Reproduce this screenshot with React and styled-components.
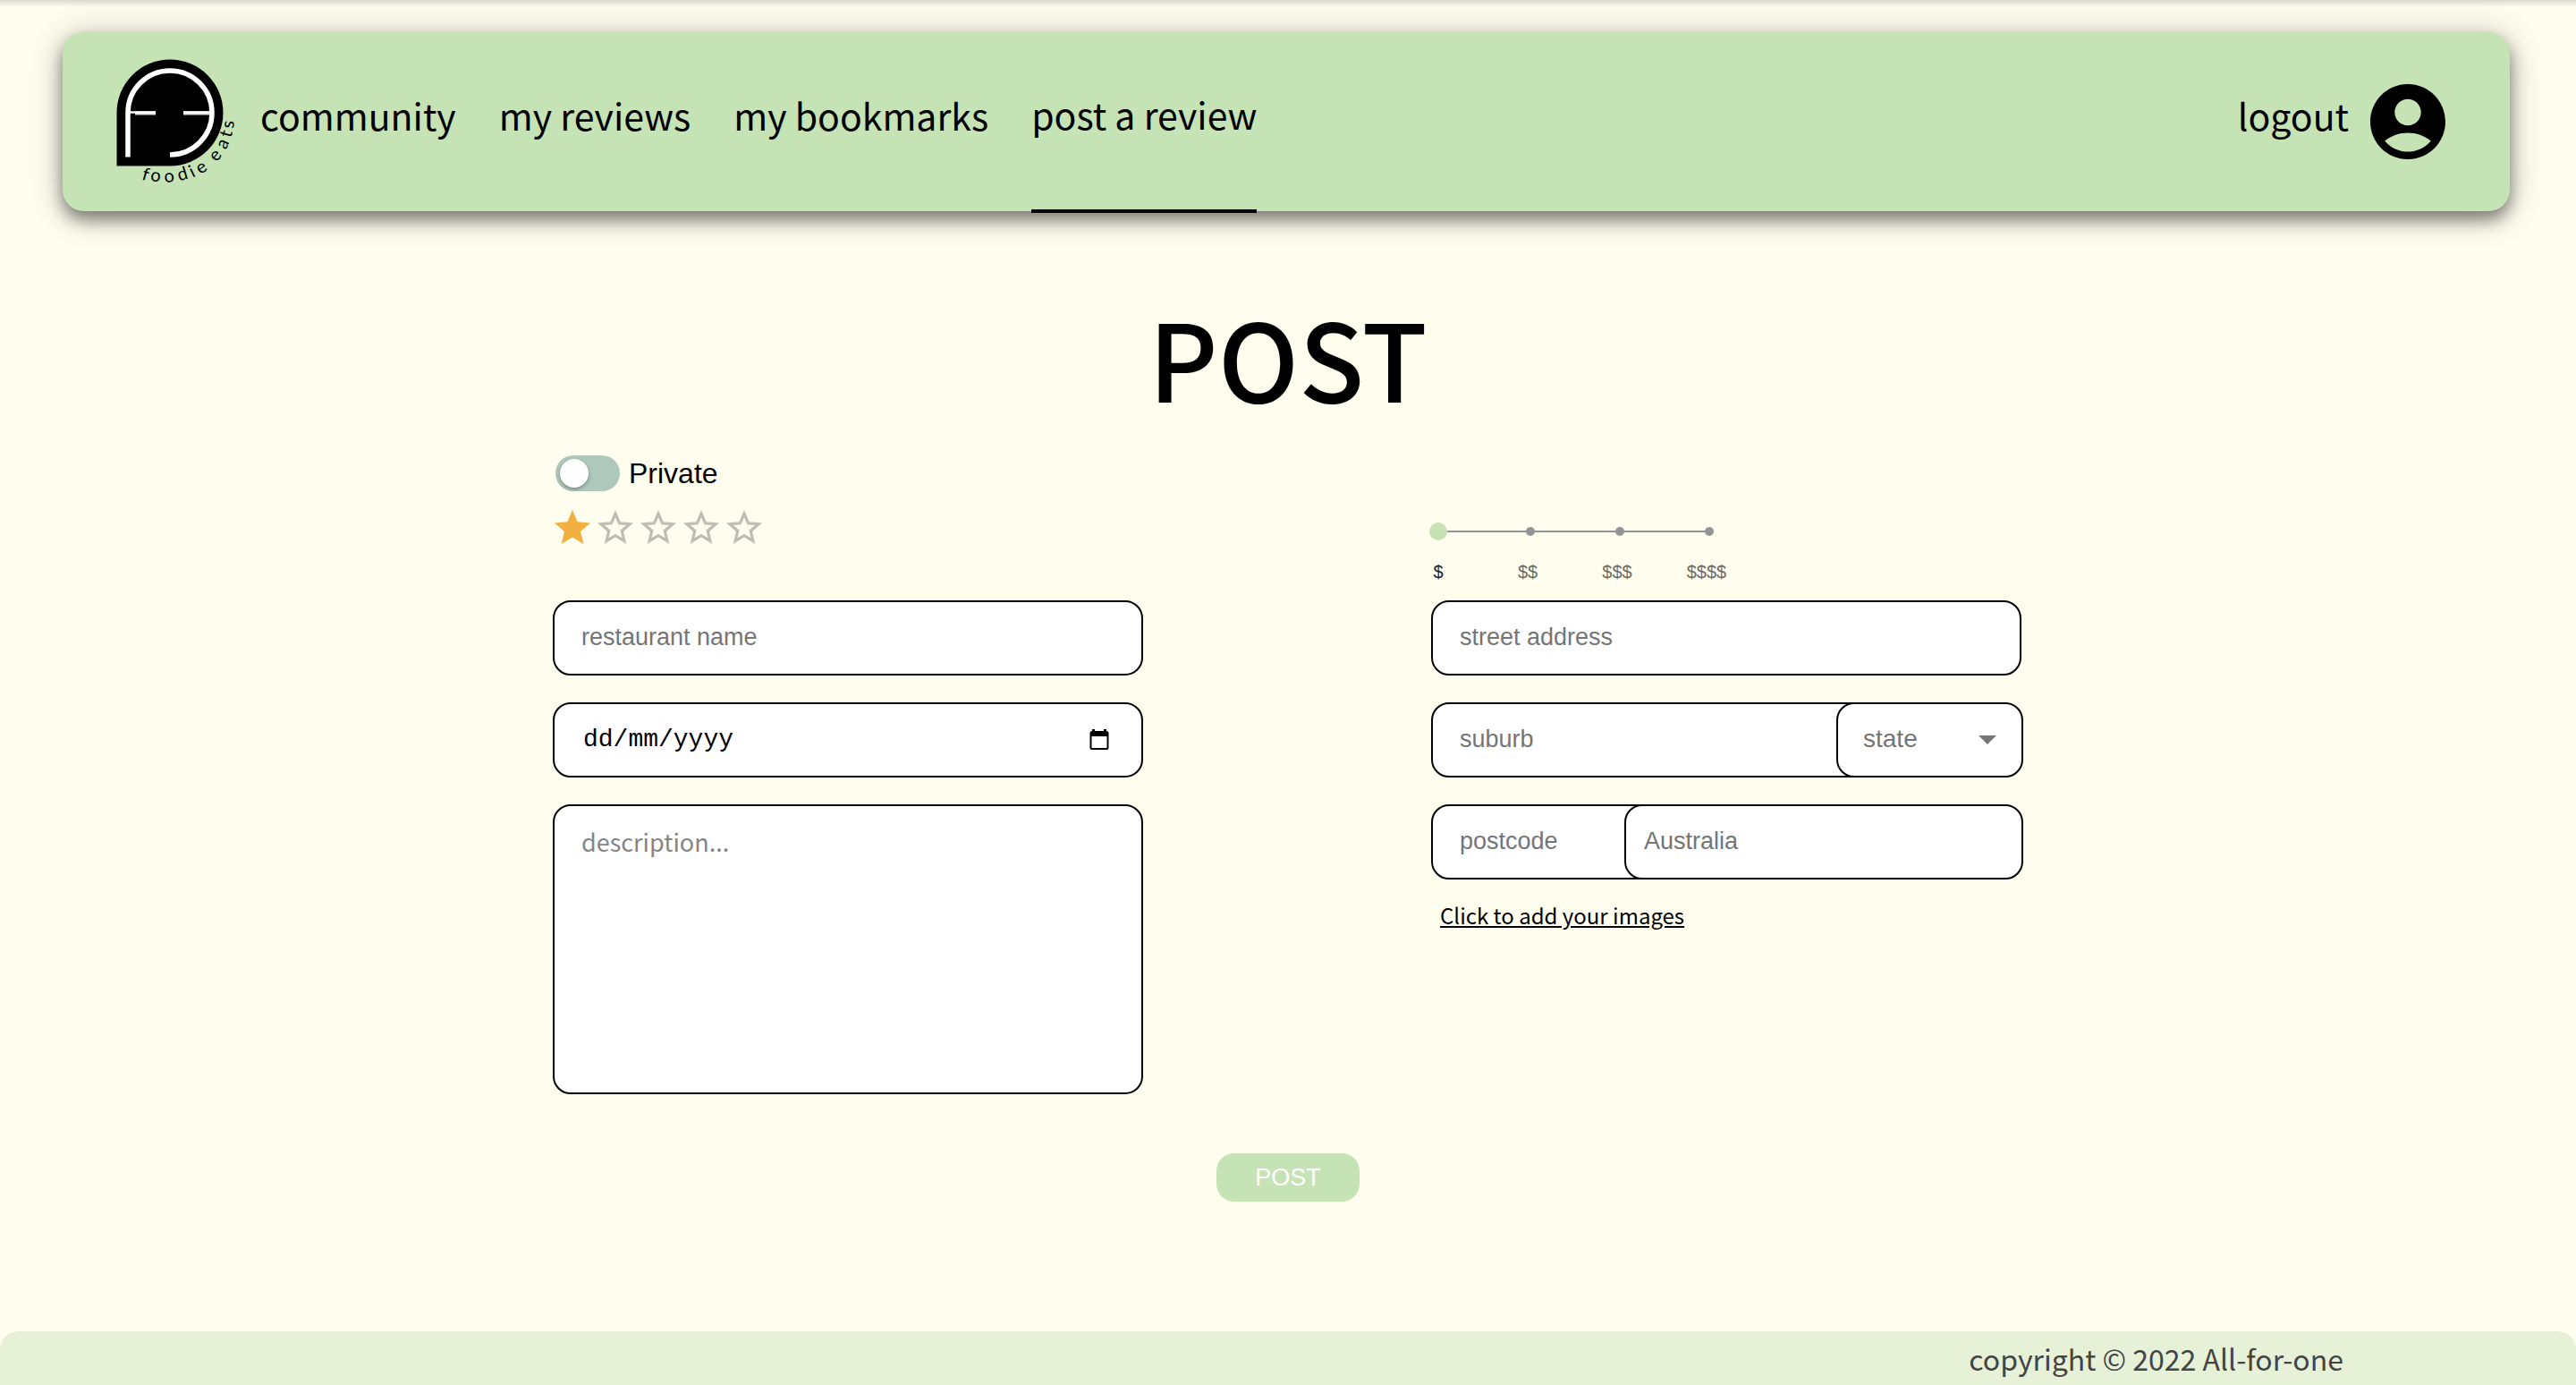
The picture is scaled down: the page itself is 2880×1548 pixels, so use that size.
import React, { useState } from 'react';
import styled, { createGlobalStyle, css } from 'styled-components';

const sans = `"Liberation Sans", Arial, sans-serif`;
const humanist = `"Noto Sans CJK JP", "Open Sans", sans-serif`;

const GlobalStyle = createGlobalStyle`
  *, *::before, *::after { box-sizing: border-box; }
  body { margin: 0; background: #fffdee; color: #000; font-family: ${humanist}; }
`;

const Page = styled.div`
  min-height: 100vh;
  display: flex;
  flex-direction: column;
  background: linear-gradient(rgba(0, 0, 0, 0.14), rgba(0, 0, 0, 0) 8px);
`;

const Header = styled.header`
  margin: 36px 74px 0 70px;
  min-height: 200px;
  padding: 0 72px 0 60px;
  display: flex;
  align-items: stretch;
  border-radius: 24px;
  background: #c6e3b5;
  box-shadow: 0 10px 18px rgba(0, 0, 0, 0.42), 0 4px 38px rgba(0, 0, 0, 0.24);
`;

const LogoLink = styled.a`
  display: flex;
  align-items: center;
  margin-right: 21px;
`;

const Nav = styled.nav`
  flex: 1;
  display: flex;
  gap: 48px;
`;

const NavLink = styled.a`
  display: flex;
  align-items: center;
  padding-bottom: 16px;
  font-size: 41px;
  line-height: 56px;
  color: #000;
  text-decoration: none;
  ${(p) =>
    p.$active &&
    css`
      margin-bottom: -2px;
      border-bottom: 4px solid #000;
    `}
`;

const Account = styled.div`
  display: flex;
  gap: 24px;
`;

const ProfileButton = styled.button`
  display: flex;
  align-items: center;
  padding: 0;
  border: 0;
  background: none;
  color: #000;
`;

const Main = styled.main`
  flex: 1;
  display: flex;
  flex-direction: column;
  align-items: center;
  padding: 102px 24px 145px;
`;

const Title = styled.h1`
  margin: 0 0 51px;
  font-size: 120px;
  line-height: 120px;
  font-weight: 500;
`;

const Form = styled.form`
  width: 100%;
  max-width: 1644px;
  display: flex;
  flex-direction: column;
  align-items: center;
  gap: 66px;
`;

const Columns = styled.div`
  width: 100%;
  display: grid;
  grid-template-columns: minmax(0, 660px) minmax(0, 662px);
  justify-content: space-between;
`;

const Options = styled.div`
  display: flex;
  flex-direction: column;
  align-items: flex-start;
  gap: 17px;
  padding-bottom: 57px;
`;

const SwitchLabel = styled.label`
  display: flex;
  align-items: center;
  gap: 10px;
  margin-left: 3px;
  font: 32px/40px ${sans};
`;

const Switch = styled.input`
  appearance: none;
  margin: 0;
  width: 72px;
  height: 40px;
  padding: 4px 5px;
  display: flex;
  align-items: center;
  border-radius: 20px;
  background: #aec8bc;
  &::before {
    content: '';
    width: 32px;
    height: 32px;
    border-radius: 50%;
    background: #fff;
    box-shadow: 0 2px 4px rgba(0, 0, 0, 0.3);
  }
  &:checked { justify-content: flex-end; }
`;

const Stars = styled.fieldset`
  display: flex;
  margin: 0 0 0 -2px;
  padding: 0;
  border: 0;
`;

const StarLabel = styled.label`
  display: flex;
  color: ${(p) => (p.$on ? '#f1b03f' : '#bfbdb2')};
`;

const HiddenRadio = styled.input`
  appearance: none;
  width: 0;
  height: 0;
  margin: 0;
`;

const Price = styled.div`
  align-self: end;
  display: flex;
  flex-direction: column;
  gap: 23px;
  padding-bottom: 20px;
`;

const SliderBox = styled.div`
  position: relative;
  width: 316px;
  height: 20px;
  margin-left: -2px;
`;

const Rail = styled.div`
  position: absolute;
  inset: 9px 3px auto 10px;
  height: 2px;
  background: #949494;
`;

const Marks = styled.div`
  position: absolute;
  inset: 5px -2px auto 8px;
  display: flex;
  justify-content: space-between;
`;

const Mark = styled.span`
  width: 10px;
  height: 10px;
  border-radius: 50%;
  background: #949494;
`;

const Range = styled.input`
  appearance: none;
  position: absolute;
  inset: 0;
  width: 100%;
  height: 20px;
  margin: 0;
  background: none;
  &::-webkit-slider-thumb {
    appearance: none;
    width: 20px;
    height: 20px;
    border-radius: 50%;
    background: #c6e3b5;
  }
`;

const PriceLabels = styled.div`
  display: grid;
  grid-template-columns: repeat(4, 100px);
  margin-left: -42px;
  font: 20px/24px ${sans};
  text-align: center;
`;

const PriceLabel = styled.span`
  color: ${(p) => (p.$on ? '#212121' : '#6b6a64')};
`;

const Fields = styled.div`
  display: flex;
  flex-direction: column;
  gap: 30px;
`;

const fieldBox = css`
  width: 100%;
  height: 84px;
  padding: 0 30px 2px;
  border: 2px solid #000;
  border-radius: 20px;
  background: #fff;
  color: #000;
  font: 27px/32px ${sans};
  outline: none;
  &::placeholder { color: #757575; opacity: 1; }
`;

const TextInput = styled.input`
  ${fieldBox}
`;

const StreetRow = styled.div`
  display: flex;
  padding-right: 2px;
`;

const DateField = styled.div`
  ${fieldBox}
  display: flex;
  align-items: center;
  justify-content: space-between;
  padding: 0 36px 0 32px;
`;

const DateInput = styled.input`
  flex: 1;
  min-width: 0;
  padding: 0;
  border: 0;
  outline: none;
  background: none;
  font: 28px/32px "Liberation Mono", "Courier New", monospace;
  &::placeholder { color: #000; opacity: 1; }
`;

const IconButton = styled.button`
  display: flex;
  padding: 0;
  border: 0;
  background: none;
  color: #000;
`;

const Description = styled.textarea`
  ${fieldBox}
  display: block;
  height: 324px;
  padding: 20px 30px;
  resize: none;
  font: 27px/40px ${humanist};
  &::placeholder { color: #858585; }
`;

const JoinedRow = styled.div`
  display: grid;
  grid-template-columns: minmax(0, 1fr) ${(p) => p.$end}px;
`;

/* The second box of a pair laps over the right end of the first. */
const LeadInput = styled(TextInput)`
  width: calc(100% + 40px);
`;

const CountryInput = styled(TextInput)`
  position: relative;
  padding: 0 20px 2px;
`;

const SelectBox = styled.div`
  ${fieldBox}
  position: relative;
  display: flex;
  align-items: center;
  padding: 0;
`;

const StateSelect = styled.select`
  appearance: none;
  width: 100%;
  height: 100%;
  padding: 0 60px 2px 28px;
  border: 0;
  border-radius: 20px;
  outline: none;
  background: none;
  color: #757575;
  font: 28px/32px ${sans};
`;

const Arrow = styled.span`
  position: absolute;
  right: 28px;
  border: 10px solid transparent;
  border-top-color: #757575;
  border-bottom: 0;
  pointer-events: none;
`;

const ImagesLink = styled.a`
  align-self: flex-start;
  margin: -10px 0 0 10px;
  font-size: 24px;
  line-height: 40px;
  color: #000;
`;

const Submit = styled.button`
  width: 160px;
  height: 54px;
  padding: 0;
  border: 0;
  border-radius: 20px;
  background: #c6e3b5;
  color: #fff;
  font: 27px/32px ${sans};
`;

const Footer = styled.footer`
  display: flex;
  justify-content: flex-end;
  padding: 6px 260px 6px 24px;
  border-radius: 20px 20px 0 0;
  background: #e7f1d7;
  color: #444;
  font-size: 32px;
  line-height: 48px;
`;

/* Wordmark letters: degrees round the badge from straight down, advance, radius. */
const LETTERS = [
  ['f', -21, 7, 81], ['o', -12, 12, 79], ['o', 0, 12, 78], ['d', 12, 11, 77],
  ['i', 21, 5, 77], ['e', 30, 10, 77], [' ', 38, 4, 76], ['e', 47, 10, 76],
  ['a', 60, 10, 75], ['t', 70, 7, 74], ['s', 79, 8, 73],
];

const LogoSvg = styled.svg`
  overflow: visible;
`;

const Wordmark = styled.text`
  font: 20px Lato, sans-serif;
  white-space: pre;
`;

function Logo() {
  const pts = LETTERS.map(([, deg, w, r]) => {
    const a = (deg * Math.PI) / 180;
    return [
      60 + r * Math.sin(a) - (w / 2) * Math.cos(a),
      60 + r * Math.cos(a) + (w / 2) * Math.sin(a),
    ];
  });
  return (
    <LogoSvg width="140" height="140" viewBox="0 0 140 140" role="img" aria-label="foodie eats">
      <path d="M.5 119.500V60A59.500 59.500 0 1 1 60 119.500Z" />
      <path d="M21 60.500H44M75 60.500H105" stroke="#dedede" strokeWidth="4" />
      <path d="M13 109.500V60A47 47 0 1 1 60 107" fill="none" stroke="#fff" strokeWidth="5.500" />
      <path d="M14 59.500H44M75 59.500H105" stroke="#fff" strokeWidth="2.500" />
      <Wordmark
        x={pts.map((p) => p[0].toFixed(1)).join(' ')}
        y={pts.map((p) => p[1].toFixed(1)).join(' ')}
        rotate={LETTERS.map((l) => -l[1] - 5).join(' ')}
      >
        foodie eats
      </Wordmark>
    </LogoSvg>
  );
}

function AccountIcon() {
  return (
    <svg width="84" height="84" viewBox="2 2 20 20" fill="currentColor" aria-hidden="true">
      <path d="M12 2C6.48 2 2 6.48 2 12s4.48 10 10 10 10-4.48 10-10S17.52 2 12 2zm0 4c1.93 0 3.5 1.57 3.5 3.5S13.93 13 12 13s-3.5-1.57-3.5-3.5S10.07 6 12 6zm0 14c-2.03 0-4.43-.82-6.14-2.88C7.55 15.8 9.68 15 12 15s4.45.8 6.14 2.12C16.43 19.18 14.03 20 12 20z" />
    </svg>
  );
}

function StarIcon({ filled }) {
  return (
    <svg width="48" height="48" viewBox="0 0 24 24" fill="currentColor" aria-hidden="true">
      {filled ? (
        <path d="M12 17.27L18.18 21l-1.64-7.03L22 9.24l-7.19-.61L12 2 9.19 8.63 2 9.24l5.46 4.73L5.82 21z" />
      ) : (
        <path d="M22 9.24l-7.19-.62L12 2 9.19 8.63 2 9.24l5.46 4.73L5.82 21 12 17.27 18.18 21l-1.63-7.03L22 9.24zM12 15.4l-3.76 2.27 1-4.28-3.32-2.88 4.38-.38L12 6.1l1.71 4.04 4.38.38-3.32 2.88 1 4.28L12 15.4z" />
      )}
    </svg>
  );
}

function CalendarIcon() {
  return (
    <svg width="22" height="24" viewBox="0 0 22 24" aria-hidden="true">
      <path
        fillRule="evenodd"
        d="M3 0h3v2h10V0h3v2a2.500 2.500 0 0 1 2.500 2.500V21a2 2 0 0 1-2 2h-17a2 2 0 0 1-2-2V4.500A2.500 2.500 0 0 1 3 2zM2.500 8v13h17V8z"
      />
    </svg>
  );
}

const LINKS = ['community', 'my reviews', 'my bookmarks', 'post a review'];
const PRICES = ['$', '$$', '$$$', '$$$$'];
const STATES = ['ACT', 'NSW', 'NT', 'QLD', 'SA', 'TAS', 'VIC', 'WA'];

export default function App() {
  const [rating, setRating] = useState(1);
  const [price, setPrice] = useState(0);

  return (
    <>
      <GlobalStyle />
      <Page>
        <Header>
          <LogoLink href="#home">
            <Logo />
          </LogoLink>
          <Nav>
            {LINKS.map((text) => (
              <NavLink key={text} href="#nav" $active={text === 'post a review'}>
                {text}
              </NavLink>
            ))}
          </Nav>
          <Account>
            <NavLink href="#logout">logout</NavLink>
            <ProfileButton type="button" aria-label="account">
              <AccountIcon />
            </ProfileButton>
          </Account>
        </Header>

        <Main>
          <Title>POST</Title>
          <Form onSubmit={(e) => e.preventDefault()}>
            <Columns>
              <Options>
                <SwitchLabel>
                  <Switch type="checkbox" role="switch" />
                  Private
                </SwitchLabel>
                <Stars aria-label="rating">
                  {[1, 2, 3, 4, 5].map((n) => (
                    <StarLabel key={n} $on={n <= rating}>
                      <HiddenRadio
                        type="radio"
                        name="rating"
                        aria-label={`${n} stars`}
                        checked={n === rating}
                        onChange={() => setRating(n)}
                      />
                      <StarIcon filled={n <= rating} />
                    </StarLabel>
                  ))}
                </Stars>
              </Options>

              <Price>
                <SliderBox>
                  <Rail />
                  <Marks>
                    {PRICES.map((p) => (
                      <Mark key={p} />
                    ))}
                  </Marks>
                  <Range
                    type="range"
                    min="0"
                    max="3"
                    value={price}
                    aria-label="price"
                    onChange={(e) => setPrice(Number(e.target.value))}
                  />
                </SliderBox>
                <PriceLabels>
                  {PRICES.map((p, i) => (
                    <PriceLabel key={p} $on={i === price}>
                      {p}
                    </PriceLabel>
                  ))}
                </PriceLabels>
              </Price>

              <Fields>
                <TextInput aria-label="restaurant name" placeholder="restaurant name" />
                <DateField>
                  <DateInput aria-label="date" placeholder="dd/mm/yyyy" />
                  <IconButton type="button" aria-label="choose date">
                    <CalendarIcon />
                  </IconButton>
                </DateField>
                <Description aria-label="description" placeholder="description..." />
              </Fields>

              <Fields>
                <StreetRow>
                  <TextInput aria-label="street address" placeholder="street address" />
                </StreetRow>
                <JoinedRow $end={209}>
                  <LeadInput aria-label="suburb" placeholder="suburb" />
                  <SelectBox>
                    <StateSelect aria-label="state" defaultValue="">
                      <option value="">state</option>
                      {STATES.map((s) => (
                        <option key={s}>{s}</option>
                      ))}
                    </StateSelect>
                    <Arrow />
                  </SelectBox>
                </JoinedRow>
                <JoinedRow $end={446}>
                  <LeadInput aria-label="postcode" placeholder="postcode" />
                  <CountryInput aria-label="country" placeholder="Australia" />
                </JoinedRow>
                <ImagesLink href="#images">Click to add your images</ImagesLink>
              </Fields>
            </Columns>
            <Submit type="submit">POST</Submit>
          </Form>
        </Main>

        <Footer>copyright © 2022 All-for-one</Footer>
      </Page>
    </>
  );
}
